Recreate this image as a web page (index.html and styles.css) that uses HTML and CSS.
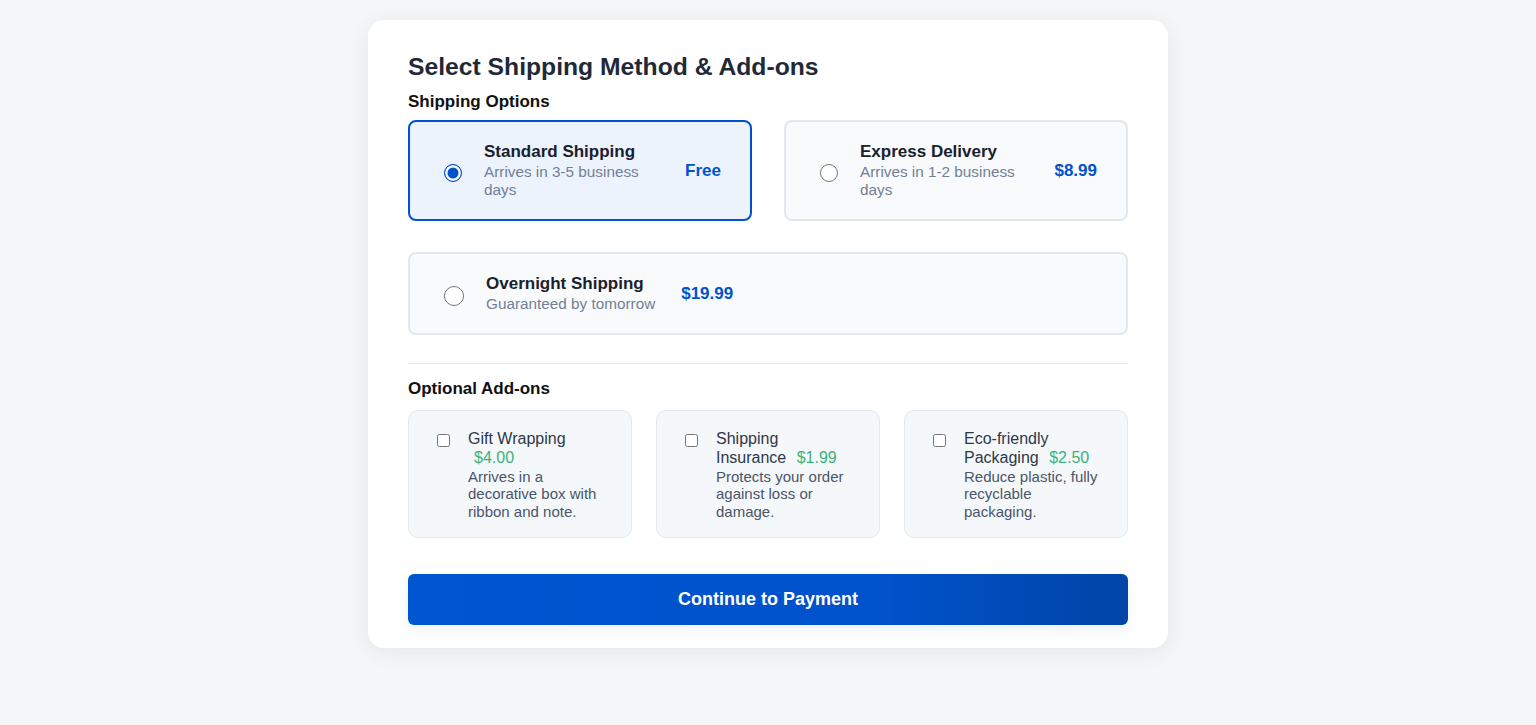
FILE: index.html
```html
<!DOCTYPE html>
<html lang="en">
<head>
<meta charset="utf-8">
<title>Select Shipping Method &amp; Add-ons</title>
<link rel="stylesheet" href="styles.css">
</head>
<body>
<main class="panel">
  <h1 class="panel-title">Select Shipping Method &amp; Add-ons</h1>

  <h2 class="section-label">Shipping Options</h2>
  <div class="options">
    <label class="option option--selected">
      <input class="radio" type="radio" name="ship" checked>
      <span class="option-info">
        <span class="option-name">Standard Shipping</span>
        <span class="option-desc">Arrives in 3-5 business days</span>
      </span>
      <span class="option-price">Free</span>
    </label>
    <label class="option">
      <input class="radio" type="radio" name="ship">
      <span class="option-info">
        <span class="option-name">Express Delivery</span>
        <span class="option-desc">Arrives in 1-2 business days</span>
      </span>
      <span class="option-price">$8.99</span>
    </label>
    <label class="option option--wide">
      <input class="radio" type="radio" name="ship">
      <span class="option-info">
        <span class="option-name">Overnight Shipping</span>
        <span class="option-desc">Guaranteed by tomorrow</span>
      </span>
      <span class="option-price">$19.99</span>
    </label>
  </div>

  <hr class="divider">

  <h2 class="section-label section-label--addons">Optional Add-ons</h2>
  <div class="addons">
    <label class="addon">
      <input class="check" type="checkbox">
      <span class="addon-info">
        <span class="addon-name">Gift Wrapping <span class="addon-price">$4.00</span></span>
        <span class="addon-desc">Arrives in a decorative box with ribbon and note.</span>
      </span>
    </label>
    <label class="addon">
      <input class="check" type="checkbox">
      <span class="addon-info">
        <span class="addon-name">Shipping Insurance <span class="addon-price">$1.99</span></span>
        <span class="addon-desc">Protects your order against loss or damage.</span>
      </span>
    </label>
    <label class="addon">
      <input class="check" type="checkbox">
      <span class="addon-info">
        <span class="addon-name">Eco-friendly Packaging <span class="addon-price">$2.50</span></span>
        <span class="addon-desc">Reduce plastic, fully recyclable packaging.</span>
      </span>
    </label>
  </div>

  <button class="continue" type="button">Continue to Payment</button>
</main>
</body>
</html>
```

FILE: styles.css
```css
* { box-sizing: border-box; }

html, body {
  margin: 0;
  padding: 0;
}

body {
  background: #f5f6f8;
  font-family: "Liberation Sans", Arial, Helvetica, sans-serif;
  padding-top: 20px;
  min-height: 725px;
}

.panel {
  width: 800px;
  margin: 0 auto;
  background: #ffffff;
  border-radius: 16px;
  box-shadow: 0 4px 22px rgba(15, 23, 42, 0.07);
  padding: 32px 40px 23px;
}

.panel-title {
  margin: 0;
  font-size: 24.7px;
  line-height: 29px;
  font-weight: 700;
  color: #1f2937;
}

.section-label {
  margin: 11px 0 8px;
  font-size: 17px;
  line-height: 20px;
  font-weight: 700;
  color: #111111;
}

.section-label--addons {
  margin: 0 0 11px;
}

.options {
  display: flex;
  flex-wrap: wrap;
  gap: 31px 32px;
}

.option {
  flex: 1 1 300px;
  display: flex;
  align-items: center;
  gap: 22px;
  padding: 20px 29px 20px 34px;
  border: 2px solid #e2e8f0;
  border-radius: 8px;
  background: #f8fafc;
  cursor: pointer;
}

.option--selected {
  border-color: #0052cc;
  background: #edf3fd;
}

.radio {
  appearance: none;
  -webkit-appearance: none;
  flex: 0 0 18px;
  width: 18px;
  height: 18px;
  margin: 4px 0 0;
  border: 1px solid #767676;
  border-radius: 50%;
  background: #ffffff;
}

.option--wide .radio {
  flex-basis: 20px;
  width: 20px;
  height: 20px;
}

.radio:checked {
  border: 1.5px solid #0052cc;
  background: #0052cc;
  box-shadow: inset 0 0 0 2.5px #ffffff;
}

.option-info {
  display: flex;
  flex-direction: column;
  min-width: 0;
}

.option-name {
  font-size: 17px;
  line-height: 20px;
  font-weight: 700;
  color: #1a202c;
  margin-bottom: 1px;
}

.option-desc {
  font-size: 15.3px;
  line-height: 18px;
  color: #718096;
}

.option-price {
  flex: 0 0 auto;
  margin-left: 4px;
  font-size: 17px;
  font-weight: 700;
  color: #0052cc;
}

.divider {
  margin: 28px 0 15px;
  border: 0;
  border-top: 1px solid #e5e7eb;
  height: 0;
}

.addons {
  display: grid;
  grid-template-columns: repeat(3, 1fr);
  gap: 24px;
}

.addon {
  display: flex;
  align-items: flex-start;
  gap: 18px;
  height: 128px;
  padding: 18px 29px 18px 28px;
  border: 1px solid #e2e8f0;
  border-radius: 10px;
  background: #f5f8fb;
  cursor: pointer;
}

.check {
  flex: 0 0 13px;
  width: 13px;
  height: 13px;
  margin: 5px 0 0;
}

.addon-info {
  flex: 1 1 auto;
  display: flex;
  flex-direction: column;
  min-width: 0;
}

.addon-name {
  font-size: 16px;
  line-height: 19px;
  color: #2d3748;
}

.addon-price {
  margin-left: 6px;
  color: #38b27a;
}

.addon-desc {
  margin-top: 1px;
  font-size: 15px;
  line-height: 17.3px;
  color: #4a5568;
}

.continue {
  display: block;
  width: 100%;
  height: 51px;
  margin-top: 36px;
  border: 0;
  border-radius: 6px;
  background: linear-gradient(90deg, #0055d0 0%, #0052cc 65%, #0045a7 100%);
  box-shadow: 0 4px 12px rgba(0, 82, 204, 0.08);
  color: #ffffff;
  font-family: "Liberation Sans", Arial, Helvetica, sans-serif;
  font-size: 18px;
  font-weight: 700;
  cursor: pointer;
}
```
